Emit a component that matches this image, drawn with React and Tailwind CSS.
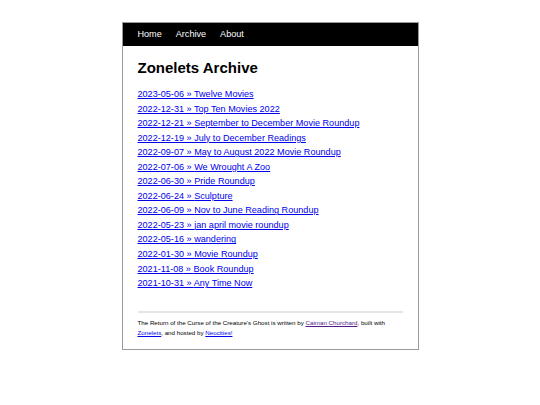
import React from 'react';

const posts = [
  ['2023-05-06', 'Twelve Movies'],
  ['2022-12-31', 'Top Ten Movies 2022'],
  ['2022-12-21', 'September to December Movie Roundup'],
  ['2022-12-19', 'July to December Readings'],
  ['2022-09-07', 'May to August 2022 Movie Roundup'],
  ['2022-07-06', 'We Wrought A Zoo'],
  ['2022-06-30', 'Pride Roundup'],
  ['2022-06-24', 'Sculpture'],
  ['2022-06-09', 'Nov to June Reading Roundup'],
  ['2022-05-23', 'jan april movie roundup'],
  ['2022-05-16', 'wandering'],
  ['2022-01-30', 'Movie Roundup'],
  ['2021-11-08', 'Book Roundup'],
  ['2021-10-31', 'Any Time Now'],
];

const App = () => {
  return (
    <div className="min-h-[405px] bg-white pt-[22px] font-['Liberation_Sans',Arial,sans-serif]">
      <div className="mx-auto w-[297px] border border-[#9a9a9a]">
        {/* Nav */}
        <nav className="flex h-[23px] items-center gap-[14px] bg-black px-[15px] text-[9.1px] text-white">
          <a href="#">Home</a>
          <a href="#">Archive</a>
          <a href="#">About</a>
        </nav>

        {/* Main */}
        <main className="px-[15px]">
          <h1 className="mt-[12px] text-[15px] font-bold leading-[20px] text-black">Zonelets Archive</h1>
          <ul className="mt-[9px] text-[9.1px] leading-[14.55px]">
            {posts.map(([date, title]) => (
              <li key={date}>
                <a href="#" className="text-[#0000ee] underline">
                  {date} » {title}
                </a>
              </li>
            ))}
          </ul>
        </main>

        {/* Footer */}
        <footer className="mx-[15px] mt-[20px] border-t-2 border-[#e5e5e5] pt-[5px] pb-[11px] text-[6.2px] leading-[10px] text-black">
          The Return of the Curse of the Creature's Ghost is written by{' '}
          <a href="#" className="text-[#551a8b] underline">Caiman Churchard</a>, built with{' '}
          <a href="#" className="text-[#0000ee] underline">Zonelets</a>, and hosted by{' '}
          <a href="#" className="text-[#0000ee] underline">Neocities!</a>
        </footer>
      </div>
    </div>
  );
};

export default App;
